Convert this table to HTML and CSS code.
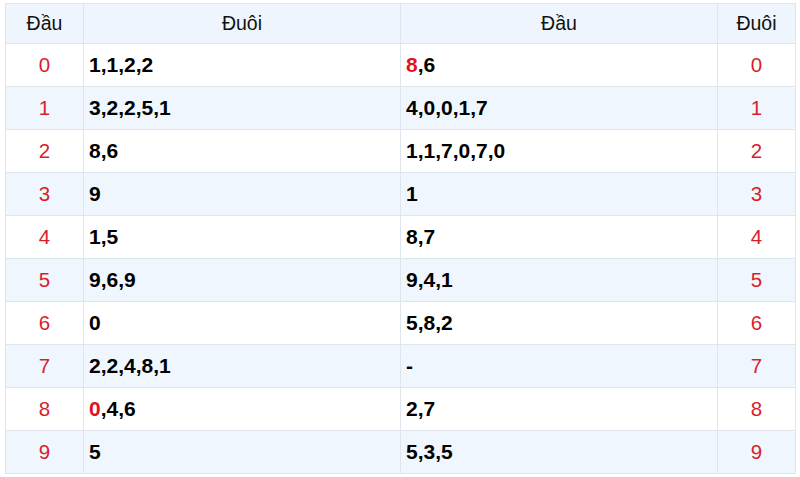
FILE: index.html
```html
<!DOCTYPE html>
<html>
<head>
<meta charset="utf-8">
<link rel="stylesheet" href="styles.css">
</head>
<body>
<table class="lt">
  <colgroup>
    <col class="c-num"><col class="c-val"><col class="c-val"><col class="c-num">
  </colgroup>
  <thead>
    <tr><th>Đầu</th><th>Đuôi</th><th>Đầu</th><th>Đuôi</th></tr>
  </thead>
  <tbody>
    <tr><td class="num">0</td><td class="val">1,1,2,2</td><td class="val"><span class="hl">8</span>,6</td><td class="num">0</td></tr>
    <tr><td class="num">1</td><td class="val">3,2,2,5,1</td><td class="val">4,0,0,1,7</td><td class="num">1</td></tr>
    <tr><td class="num">2</td><td class="val">8,6</td><td class="val">1,1,7,0,7,0</td><td class="num">2</td></tr>
    <tr><td class="num">3</td><td class="val">9</td><td class="val">1</td><td class="num">3</td></tr>
    <tr><td class="num">4</td><td class="val">1,5</td><td class="val">8,7</td><td class="num">4</td></tr>
    <tr><td class="num">5</td><td class="val">9,6,9</td><td class="val">9,4,1</td><td class="num">5</td></tr>
    <tr><td class="num">6</td><td class="val">0</td><td class="val">5,8,2</td><td class="num">6</td></tr>
    <tr><td class="num">7</td><td class="val">2,2,4,8,1</td><td class="val">-</td><td class="num">7</td></tr>
    <tr><td class="num">8</td><td class="val"><span class="hl">0</span>,4,6</td><td class="val">2,7</td><td class="num">8</td></tr>
    <tr><td class="num">9</td><td class="val">5</td><td class="val">5,3,5</td><td class="num">9</td></tr>
  </tbody>
</table>
</body>
</html>
```
FILE: styles.css
```css
html, body {
  margin: 0;
  padding: 0;
  background: #ffffff;
}
body {
  padding: 3px 4px 0 5px;
  font-family: "Liberation Sans", Arial, sans-serif;
}
.lt {
  width: 791px;
  border-collapse: collapse;
  table-layout: fixed;
}
.c-num { width: 78px; }
.c-val { width: 317px; }
.lt th, .lt td {
  border: 1px solid #dfe5ec;
  padding: 0 5px;
}
.lt th {
  height: 39px;
  background: #eef5fc;
  font-weight: normal;
  font-size: 19.5px;
  color: #111;
  text-align: center;
}
.lt td {
  height: 42px;
}
.lt tbody tr:nth-child(even) td {
  background: #eff6fd;
}
.num {
  text-align: center;
  color: #d81e2c;
  font-size: 20.5px;
}
.val {
  font-weight: bold;
  font-size: 21px;
  color: #000;
}
.hl {
  color: #e3101f;
}
```
